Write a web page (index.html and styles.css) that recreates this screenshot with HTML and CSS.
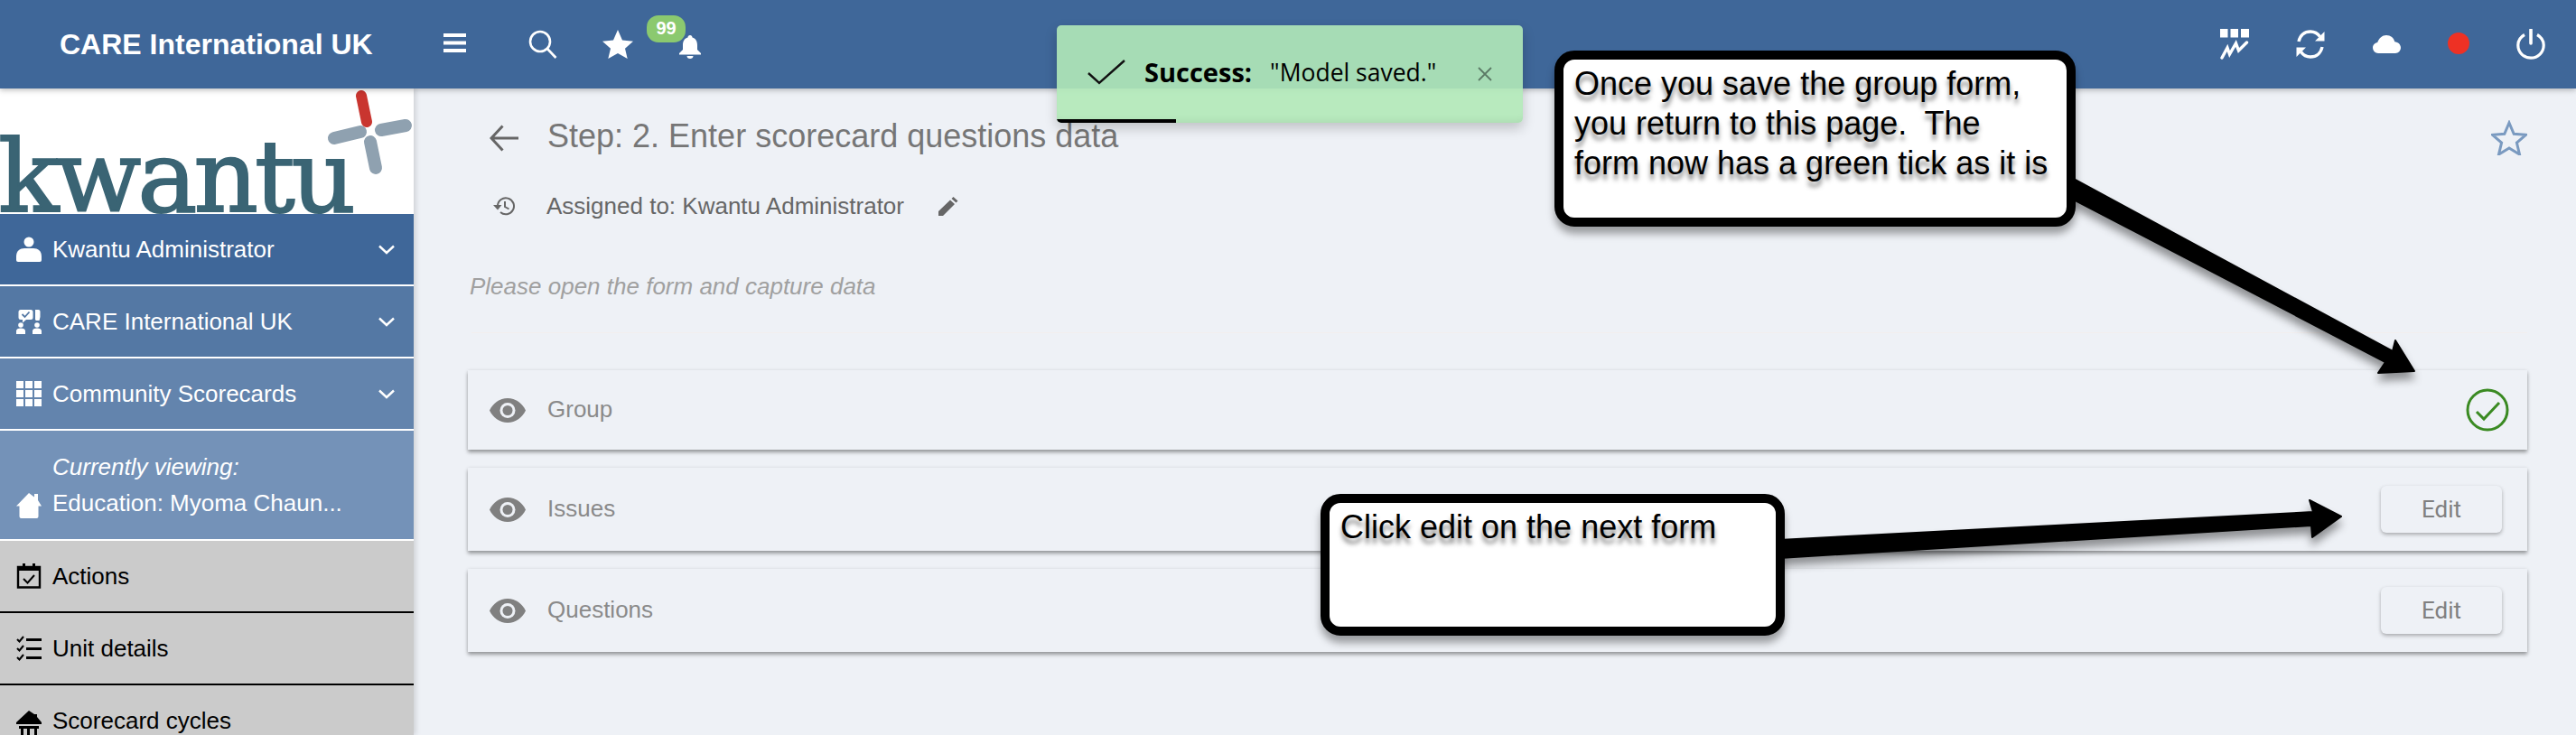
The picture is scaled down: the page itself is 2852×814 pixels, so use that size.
FILE: index.html
```html
<!DOCTYPE html>
<html lang="en">

<head>
    <meta charset="UTF-8">
    <meta name="viewport" content="width=device-width, initial-scale=1.0">
    <title>Step: 2. Enter scorecard questions data</title>
    <link rel="stylesheet" href="styles.css">
</head>

<body>
    <header class="topbar">
        <div class="brand">CARE International UK</div>
        <div class="top-left">
            <svg class="ic-menu" viewBox="0 0 25 21"><path d="M0 0h25v4H0zM0 8.500h25v4H0zM0 17h25v4H0z" fill="#fff"/></svg>
            <svg class="ic-search" viewBox="0 0 32 32"><circle cx="13" cy="13" r="11" fill="none" stroke="#fff" stroke-width="2.600"/><path d="M21 21l9.500 10" stroke="#fff" stroke-width="2.600" fill="none"/></svg>
            <svg class="ic-star" viewBox="0 0 34 32"><path d="M17 0l5 11.500 12 1.200-9 8 2.700 11.300L17 26l-10.700 6L9 20.700l-9-8 12-1.200z" fill="#fff"/></svg>
            <div class="bell-wrap">
                <svg class="ic-bell" viewBox="0 0 24 26"><path d="M12 0c1.500 0 2.500 1 2.500 2.500C18.500 3.500 20 7 20 11v5l4 4v1.500H0V20l4-4v-5c0-4 1.500-7.500 5.500-8.500C9.500 1 10.500 0 12 0zM8.500 23h7c0 2-1.500 3-3.500 3s-3.500-1-3.500-3z" fill="#fff"/></svg>
                <span class="badge">99</span>
            </div>
        </div>
        <div class="top-right">
            <svg class="ic-top" viewBox="0 0 32 34"><path d="M0 0h8.500v9.500H0zM11.500 0h8.500v9.500h-8.500zM23 0h9v9.500h-9z" fill="#fff"/><path d="M2 32l6-11 2.500 7 7-12 3 8 9-9" fill="none" stroke="#fff" stroke-width="3.400" stroke-linecap="round"/></svg>
            <svg class="ic-top" viewBox="0 0 32 34"><path d="M3 14C4.500 7 9.500 3 16 3c4.500 0 8 2 10.500 5.500M29 20c-1.500 7-6.500 11-13 11-4.500 0-8-2-10.500-5.500" fill="none" stroke="#fff" stroke-width="3.400"/><path d="M31.500 3v10.500H21zM.500 31V20.500H11z" fill="#fff"/></svg>
            <svg class="ic-top ic-cloud" viewBox="0 0 32 20"><path d="M7 20a6 6 0 0 1-6-6c0-3.200 2.300-5.500 5.200-6C8 3 11.500 0 16 0c4.800 0 8.300 3 9.300 7.300 3.800.4 6.700 3 6.700 6.700a6 6 0 0 1-6 6z" fill="#fff"/></svg>
            <span class="status-dot"></span>
            <svg class="ic-top" viewBox="0 0 32 34"><path d="M16 1v15" stroke="#fff" stroke-width="3.600" stroke-linecap="round" fill="none"/><path d="M9 6.500C4.500 9 1.800 13 1.800 18c0 8 6.300 14.200 14.200 14.200S30.200 26 30.200 18c0-5-2.700-9-7.200-11.500" fill="none" stroke="#fff" stroke-width="3.200"/></svg>
        </div>
    </header>

    <div class="layout">
        <aside class="sidebar">
            <div class="logo">
                <span class="logo-text">kwantu</span>
                <svg class="logo-mark" viewBox="0 0 100 100">
                    <path d="M42 6l6 29" stroke="#c9352f" stroke-width="12" stroke-linecap="round"/>
                    <path d="M12 53l29-7M64 44l27-5M52 57l6 29" stroke="#8fa1b0" stroke-width="14" stroke-linecap="round"/>
                </svg>
            </div>
            <nav>
                <div class="nav-row c1">
                    <svg class="nav-ic" viewBox="0 0 28 28"><circle cx="14" cy="6" r="5.500" fill="#fff"/><path d="M0 22c0-6 4-9 9-9h10c5 0 9 3 9 9v4a2 2 0 0 1-2 2H2a2 2 0 0 1-2-2z" fill="#fff"/></svg>
                    <span class="nav-label">Kwantu Administrator</span>
                    <svg class="chev" viewBox="0 0 18 11"><path d="M1 1.500l8 7.500 8-7.500" fill="none" stroke="#fff" stroke-width="2.400"/></svg>
                </div>
                <div class="nav-row c2">
                    <svg class="nav-ic" viewBox="0 0 28 28"><path d="M5 1h11a2.500 2.500 0 0 1 2.500 2.500v6A2.500 2.500 0 0 1 16 12h-5l-4 3.500V12H5a2.500 2.500 0 0 1-2.500-2.500v-6A2.500 2.500 0 0 1 5 1z" fill="#fff"/><path d="M6.500 6l3 3 5-5.500" fill="none" stroke="#5478a4" stroke-width="1.800"/><path d="M21 1h3.500a2 2 0 0 1 2 2v6l-1 4H22l-1-1z" fill="#fff"/><circle cx="5" cy="18" r="2.800" fill="#fff"/><circle cx="23" cy="18" r="2.800" fill="#fff"/><path d="M0 28v-3.500C0 22.500 2 21.500 5 21.500s5 1 5 3V28zM18 28v-3.500c0-2 2-3 5-3s5 1 5 3V28z" fill="#fff"/></svg>
                    <span class="nav-label">CARE International UK</span>
                    <svg class="chev" viewBox="0 0 18 11"><path d="M1 1.500l8 7.500 8-7.500" fill="none" stroke="#fff" stroke-width="2.400"/></svg>
                </div>
                <div class="nav-row c3">
                    <svg class="nav-ic" viewBox="0 0 28 28"><path d="M0 0h8v8H0zM10 0h8v8h-8zM20 0h8v8h-8zM0 10h8v8H0zM10 10h8v8h-8zM20 10h8v8h-8zM0 20h8v8H0zM10 20h8v8h-8zM20 20h8v8h-8z" fill="#fff"/></svg>
                    <span class="nav-label">Community Scorecards</span>
                    <svg class="chev" viewBox="0 0 18 11"><path d="M1 1.500l8 7.500 8-7.500" fill="none" stroke="#fff" stroke-width="2.400"/></svg>
                </div>
                <div class="nav-current">
                    <svg class="nav-ic home" viewBox="0 0 28 28"><path d="M14 0l6 4.500V1h4v7l4 6.500h-3.500V26a2 2 0 0 1-2 2H5.500a2 2 0 0 1-2-2V14.500H0z" fill="#fff"/></svg>
                    <div class="current-text">
                        <div class="current-note">Currently viewing:</div>
                        <div>Education: Myoma Chaun...</div>
                    </div>
                </div>
                <div class="nav-row grey">
                    <svg class="nav-ic" viewBox="0 0 28 28"><path d="M2 4h24v22.500H2z" fill="none" stroke="#000" stroke-width="2.400"/><path d="M2 4h24v4H2z"/><path d="M7 0h3v6H7zM18 0h3v6h-3z"/><path d="M8 17l4.500 4.500L20 13" fill="none" stroke="#000" stroke-width="2"/></svg>
                    <span class="nav-label">Actions</span>
                </div>
                <div class="nav-row grey">
                    <svg class="nav-ic" viewBox="0 0 28 28"><path d="M11 3h17v3H11zM11 13h17v3H11zM11 23h17v3H11z"/><path d="M1 4l2.500 2.500L8 1M1 14l2.500 2.500L8 11M1 24l2.500 2.500L8 21" fill="none" stroke="#000" stroke-width="2"/></svg>
                    <span class="nav-label">Unit details</span>
                </div>
                <div class="nav-row grey">
                    <svg class="nav-ic cycles" viewBox="0 0 28 28"><path d="M14 0l6 4h3v3l5 6v2H0v-2z"/><path d="M3 17h22v3H3zM5 20v8h3v-8zM12 20v8h3v-8zM20 20v8h3v-8z"/></svg>
                    <span class="nav-label">Scorecard cycles</span>
                </div>
            </nav>
        </aside>

        <main class="content">
            <div class="title-row">
                <svg class="ic-back" viewBox="0 0 32 30"><path d="M14.500 1.500L2 15l12.500 13.500M2 15h30" fill="none" stroke="#666" stroke-width="3"/></svg>
                <h1>Step: 2. Enter scorecard questions data</h1>
                <svg class="ic-fav" viewBox="0 0 40 39"><path d="M20 3l5.200 12.300 13.300 1-10.100 8.700 3.100 13L20 31l-11.500 7 3.100-13L1.500 16.300l13.300-1z" fill="none" stroke="#7a9ac0" stroke-width="3"/></svg>
            </div>
            <div class="assigned-row">
                <svg class="ic-history" viewBox="0 0 24 22"><path d="M5 11a9 9 0 1 1 3 7" fill="none" stroke="#666" stroke-width="2"/><path d="M0 10h9.500L5 15.500z" fill="#666"/><path d="M13 6v6l4.500 2.500" fill="none" stroke="#666" stroke-width="2"/></svg>
                <span>Assigned to: Kwantu Administrator</span>
                <svg class="ic-pencil" viewBox="0 0 22 21"><path d="M0 21v-5L13 3.500l5 4.500L5 21zM14.500 2L16.500 0l5 4.500-2 2z" fill="#666"/></svg>
            </div>
            <p class="hint">Please open the form and capture data</p>
            <hr class="divider">

            <div class="form-card first">
                <svg class="ic-eye" viewBox="0 0 40 27"><path d="M20 0C11 0 4 5.500 0 13.500 4 21.500 11 27 20 27s16-5.500 20-13.500C36 5.500 29 0 20 0z" fill="#808080"/><circle cx="20" cy="13.500" r="8.500" fill="#eef1f6"/><circle cx="20" cy="13.500" r="5.500" fill="#808080"/></svg>
                <span class="form-name">Group</span>
                <svg class="ic-done" viewBox="0 0 48 48"><circle cx="24" cy="24" r="22" fill="none" stroke="#3a8a22" stroke-width="3"/><path d="M12 26l8 8 17-18" fill="none" stroke="#3a8a22" stroke-width="3"/></svg>
            </div>
            <div class="form-card">
                <svg class="ic-eye" viewBox="0 0 40 27"><path d="M20 0C11 0 4 5.500 0 13.500 4 21.500 11 27 20 27s16-5.500 20-13.500C36 5.500 29 0 20 0z" fill="#808080"/><circle cx="20" cy="13.500" r="8.500" fill="#eef1f6"/><circle cx="20" cy="13.500" r="5.500" fill="#808080"/></svg>
                <span class="form-name">Issues</span>
                <button class="edit-btn">Edit</button>
            </div>
            <div class="form-card">
                <svg class="ic-eye" viewBox="0 0 40 27"><path d="M20 0C11 0 4 5.500 0 13.500 4 21.500 11 27 20 27s16-5.500 20-13.500C36 5.500 29 0 20 0z" fill="#808080"/><circle cx="20" cy="13.500" r="8.500" fill="#eef1f6"/><circle cx="20" cy="13.500" r="5.500" fill="#808080"/></svg>
                <span class="form-name">Questions</span>
                <button class="edit-btn">Edit</button>
            </div>
        </main>
    </div>

    <!-- toast -->
    <div class="toast">
        <svg class="toast-check" viewBox="0 0 42 28"><path d="M1 15l12 11L41 1" fill="none" stroke="#111" stroke-width="2.400"/></svg>
        <b class="toast-title">Success:</b>
        <span class="toast-msg">"Model saved."</span>
        <svg class="toast-x" viewBox="0 0 16 16"><path d="M1 1l14 14M15 1L1 15" stroke="#5c7a66" stroke-width="1.800"/></svg>
        <div class="toast-bar"></div>
    </div>

    <!-- annotations drawn over the screenshot -->
    <svg class="arrows" viewBox="0 0 2852 814">
        <path d="M2290 195L2649 389 2652 377 2673 411 2633 413 2641 401 2290 218z" fill="#000" stroke="#000" stroke-width="2" stroke-linejoin="round"/>
        <path d="M1970 598L2561 567 2557 554 2592 572 2560 595 2559 582 1970 618z" fill="#000" stroke="#000" stroke-width="2" stroke-linejoin="round"/>
    </svg>
    <div class="callout one">Once you save the group form, you return to this page.&nbsp; The<br>form now has a green tick as it is</div>
    <div class="callout two">Click edit on the next form</div>
</body>

</html>
```

FILE: styles.css
```css
* {
    box-sizing: border-box;
}

html,
body {
    height: 100%;
}

body {
    margin: 0;
    font-family: "Liberation Sans", Arial, sans-serif;
    background-color: #eef1f6;
    overflow: hidden;
    position: relative;
}

svg {
    display: block;
    flex: none;
}

/* top bar */
.topbar {
    height: 98px;
    background-color: #3f6799;
    display: flex;
    align-items: center;
    color: #fff;
    box-shadow: 0 2px 6px rgba(0, 0, 0, 0.25);
    position: relative;
    z-index: 2;
}

.brand {
    width: 491px;
    padding-left: 66px;
    font-size: 32px;
    font-weight: bold;
}

.top-left {
    display: flex;
    align-items: center;
}

.ic-menu {
    width: 25px;
    height: 21px;
    margin-right: 69px;
    margin-top: -4px;
}

.ic-search {
    width: 32px;
    height: 32px;
    margin-right: 50px;
}

.ic-star {
    width: 34px;
    height: 32px;
    margin-right: 51px;
}

.bell-wrap {
    position: relative;
    margin-top: 6px;
}

.ic-bell {
    width: 24px;
    height: 26px;
}

.badge {
    position: absolute;
    left: -36px;
    top: -22px;
    width: 43px;
    height: 30px;
    border-radius: 13px;
    background-color: #8bc96f;
    font-size: 20px;
    font-weight: bold;
    text-align: center;
    line-height: 28px;
}

.top-right {
    margin-left: auto;
    margin-right: 34px;
    display: flex;
    align-items: center;
    gap: 52px;
}

.ic-top {
    width: 32px;
    height: 34px;
}

.ic-cloud {
    height: 20px;
}

.status-dot {
    width: 24px;
    height: 24px;
    border-radius: 50%;
    background-color: #ee3124;
    margin-top: -3px;
}

/* sidebar */
.layout {
    display: flex;
    height: 716px;
}

.sidebar {
    width: 458px;
    flex: none;
    box-shadow: 2px 0 6px rgba(0, 0, 0, 0.15);
    position: relative;
    z-index: 1;
}

.logo {
    height: 139px;
    background-color: #fff;
    position: relative;
}

.logo-text {
    position: absolute;
    left: -2px;
    bottom: -14px;
    font-family: "DejaVu Serif", serif;
    font-size: 111px;
    letter-spacing: -4px;
    line-height: 1;
    color: #3a6474;
    -webkit-text-stroke: 2px #3a6474;
}

.logo-mark {
    position: absolute;
    left: 358px;
    top: 2px;
    width: 100px;
    height: 100px;
}

.nav-row {
    height: 80px;
    display: flex;
    align-items: center;
    padding-left: 18px;
    padding-right: 21px;
    color: #fff;
    font-size: 26px;
    border-bottom: 2px solid #fff;
}

.nav-ic {
    width: 28px;
    height: 28px;
    margin-right: 12px;
}

.nav-ic.home {
    margin-bottom: 3px;
}

.nav-ic.cycles {
    margin-top: 6px;
}

.nav-label {
    flex: 1;
}

.chev {
    width: 18px;
    height: 11px;
}

.c1 {
    background-color: #3f6799;
}

.c2 {
    background-color: #5478a4;
}

.c3 {
    background-color: #6384ad;
}

.nav-current {
    height: 122px;
    background-color: #7492b8;
    color: #fff;
    font-size: 26px;
    padding: 0 18px 20px;
    display: flex;
    align-items: flex-end;
    border-bottom: 2px solid #fff;
}

.current-text {
    line-height: 40px;
}

.current-note {
    font-style: italic;
}

.grey {
    background-color: #cbcbcb;
    color: #000;
    border-bottom-color: #000;
}

/* main area */
.content {
    flex: 1;
    padding: 0 54px 0 60px;
    color: #666;
    position: relative;
}

.title-row {
    display: flex;
    align-items: center;
    height: 78px;
    margin-top: 14px;
    padding-left: 24px;
}

.title-row h1 {
    margin: 0 0 0 32px;
    font-size: 36px;
    font-weight: normal;
    color: #767676;
    flex: 1;
}

.ic-back {
    width: 32px;
    height: 30px;
    margin-top: 4px;
}

.ic-fav {
    width: 40px;
    height: 39px;
    margin-top: 2px;
}

.assigned-row {
    display: flex;
    align-items: center;
    height: 40px;
    margin-top: 18px;
    padding-left: 28px;
    font-size: 26px;
}

.ic-history {
    width: 24px;
    height: 22px;
    margin-right: 35px;
}

.ic-pencil {
    width: 22px;
    height: 21px;
    margin-left: 38px;
}

.hint {
    margin: 49px 0 0 2px;
    font-size: 26px;
    line-height: 40px;
    font-style: italic;
    color: #a0a0a0;
}

.divider {
    border: none;
    border-top: 1px solid #f2eeee;
    margin: 31px 0 0 4px;
}

.form-card {
    display: flex;
    align-items: center;
    height: 92px;
    margin-top: 20px;
    padding: 0 28px 0 24px;
    box-shadow: 0 3px 4px rgba(0, 0, 0, 0.35), 0 0 4px rgba(0, 0, 0, 0.08);
}

.form-card.first {
    height: 88px;
    margin-top: 41px;
    padding-right: 20px;
}

.ic-eye {
    width: 40px;
    height: 27px;
    margin-right: 24px;
}

.form-name {
    flex: 1;
    padding-bottom: 2px;
    font-size: 26px;
    color: #8a8a8a;
}

.ic-done {
    width: 48px;
    height: 48px;
}

.edit-btn {
    width: 134px;
    height: 52px;
    border: none;
    border-radius: 6px;
    background-color: #eef1f6;
    color: #808080;
    font-family: Roboto, sans-serif;
    font-size: 26px;
    box-shadow: 0 2px 4px rgba(0, 0, 0, 0.3);
}

/* toast */
.toast {
    position: absolute;
    left: 1170px;
    top: 28px;
    width: 516px;
    height: 108px;
    background-color: rgba(177, 233, 184, 0.9);
    border-radius: 5px;
    box-shadow: 0 6px 14px rgba(0, 0, 0, 0.2), inset 0 -8px 8px -6px rgba(0, 0, 0, 0.07);
    display: flex;
    align-items: center;
    padding: 0 0 5px 34px;
    color: #000;
    font-family: "Open Sans", sans-serif;
    font-size: 26.500px;
    z-index: 3;
    overflow: hidden;
}

.toast-check {
    width: 42px;
    height: 28px;
    margin-right: 21px;
}

.toast-title {
    font-size: 29px;
}

.toast-msg {
    margin-left: 20px;
    flex: 1;
}

.toast-x {
    width: 16px;
    height: 16px;
    margin-right: 34px;
    margin-top: 4px;
}

.toast-bar {
    position: absolute;
    left: 0;
    bottom: 0;
    width: 132px;
    height: 4px;
    background-color: #000;
}

/* annotations */
.arrows {
    position: absolute;
    left: 0;
    top: 0;
    width: 2852px;
    height: 814px;
    z-index: 4;
    filter: drop-shadow(0 8px 5px rgba(0, 0, 0, 0.4));
}

.callout {
    position: absolute;
    z-index: 5;
    background-color: #fff;
    border: 10px solid #000;
    border-radius: 22px;
    color: #000;
    font-size: 36px;
    line-height: 44px;
    padding: 5px 12px;
    box-shadow: 0 8px 8px rgba(0, 0, 0, 0.35);
    text-shadow: 0 6px 5px rgba(0, 0, 0, 0.5);
}

.callout.one {
    left: 1721px;
    top: 56px;
    width: 577px;
    height: 195px;
}

.callout.two {
    left: 1462px;
    top: 547px;
    width: 514px;
    height: 157px;
}
```
